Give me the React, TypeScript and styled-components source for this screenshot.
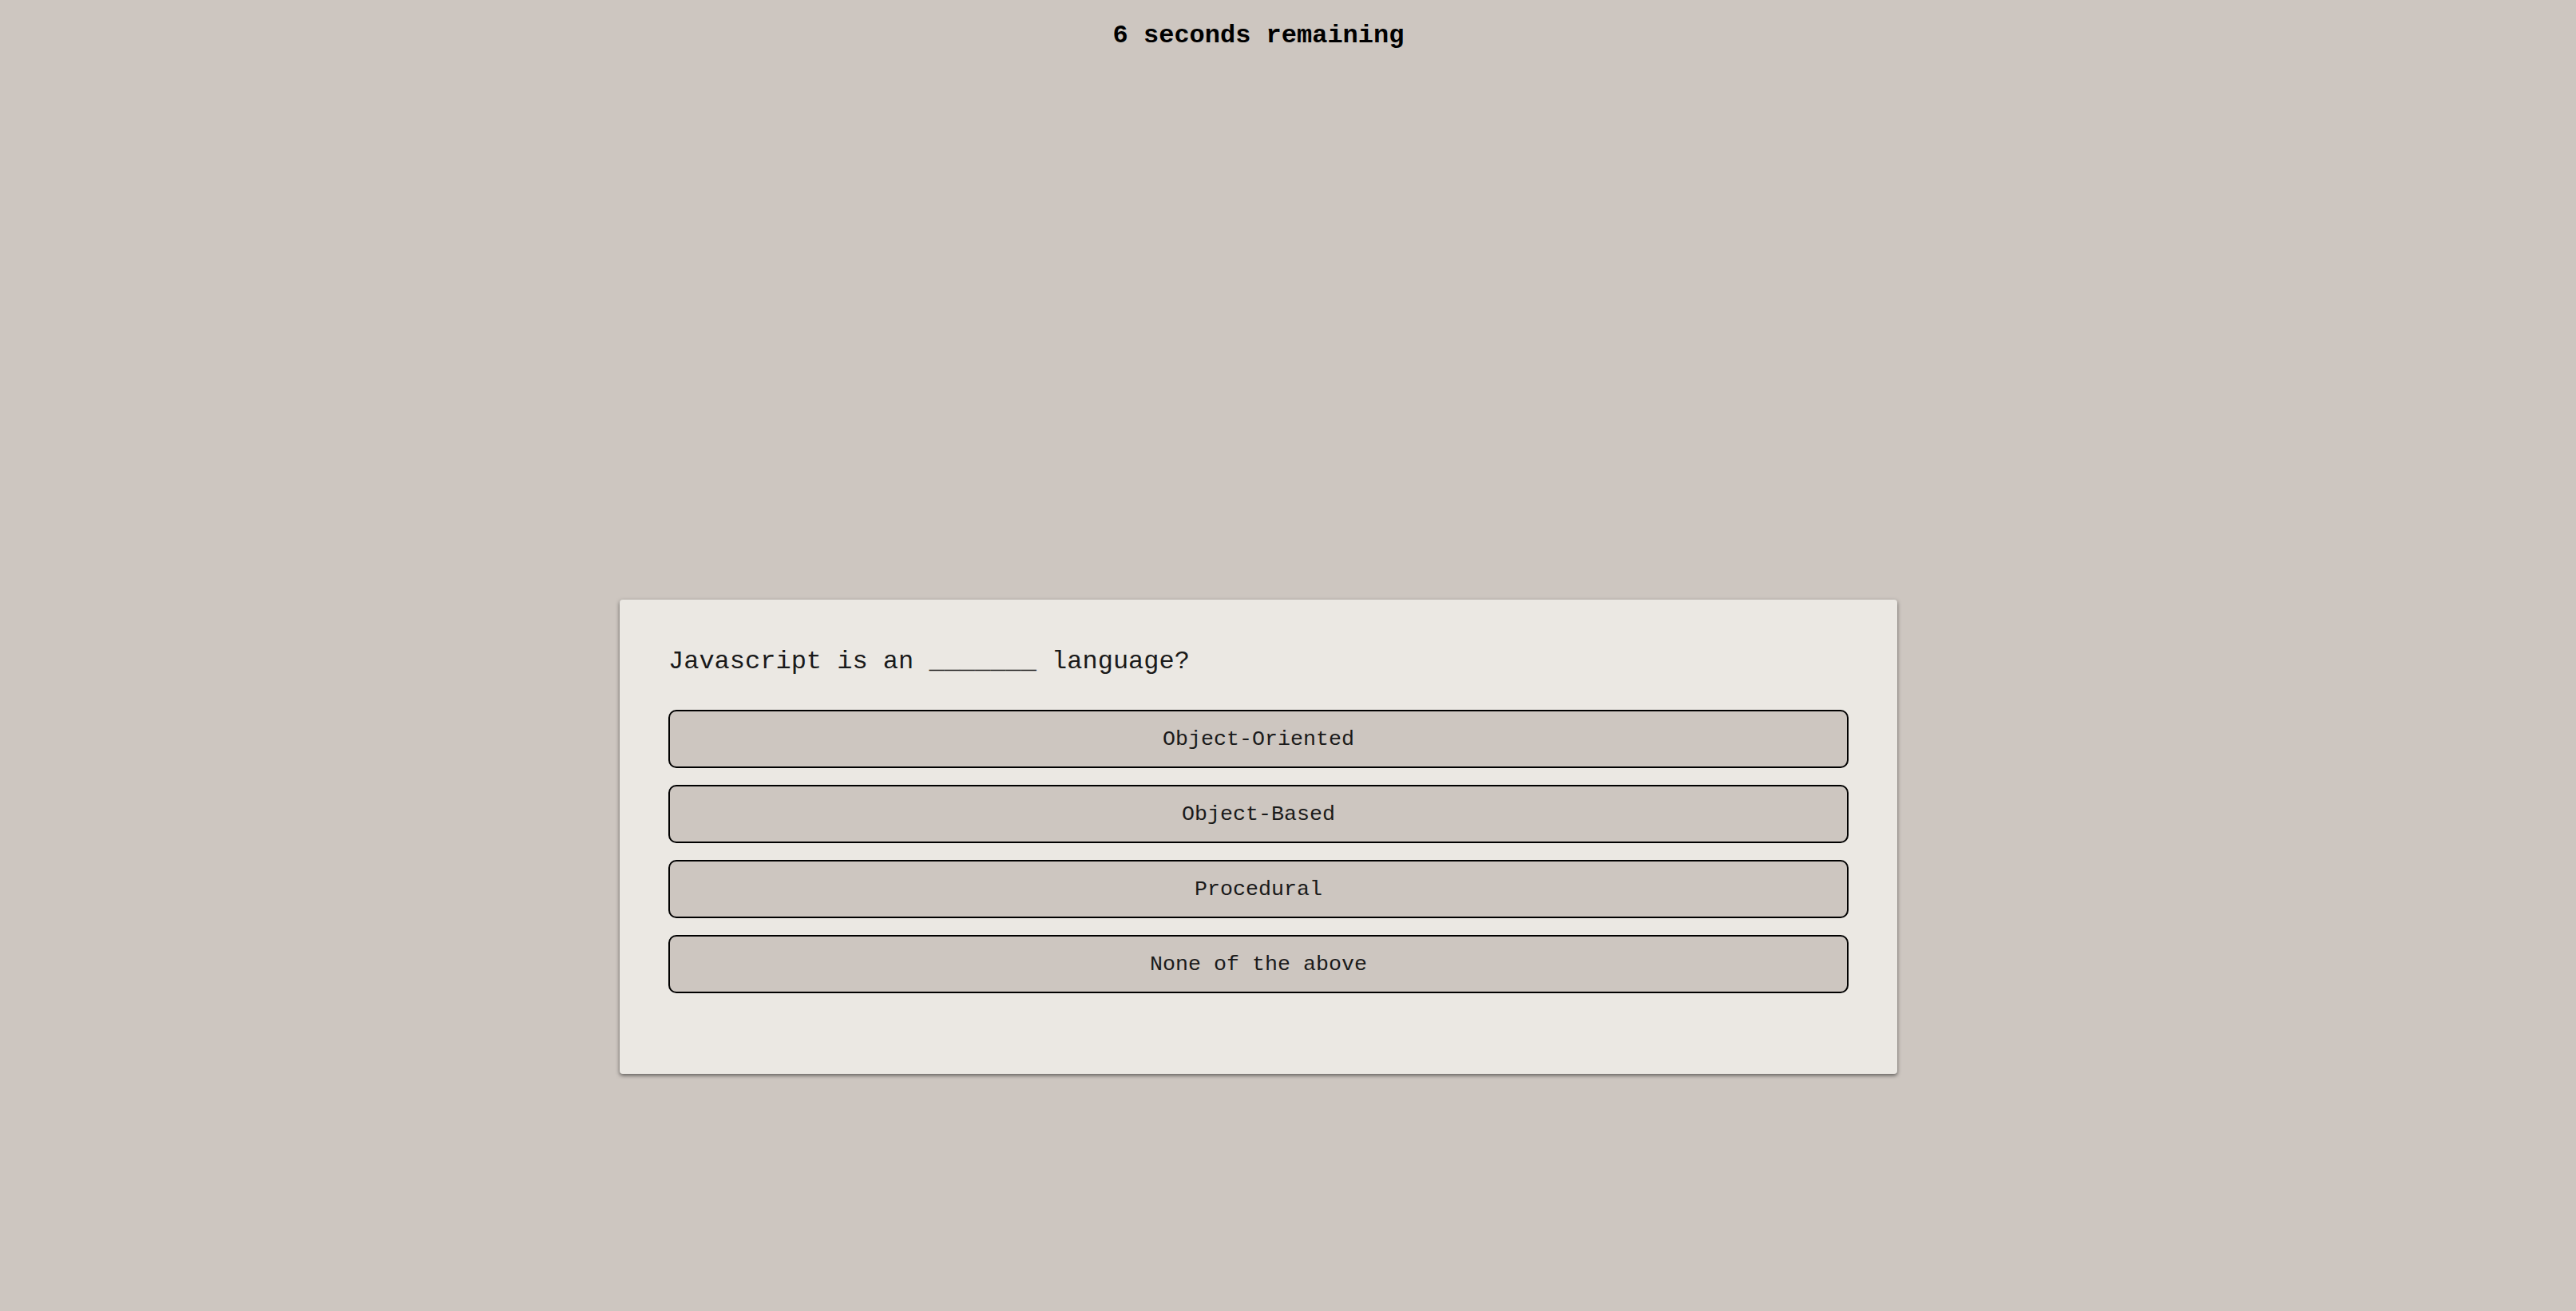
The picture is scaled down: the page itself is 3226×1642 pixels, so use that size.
import React from "react";
import styled, { createGlobalStyle } from "styled-components";

const Global = createGlobalStyle`
  html, body {
    margin: 0;
    padding: 0;
    background: #cdc6c0;
    font-family: "Liberation Mono", "Courier New", monospace;
  }
`;

const Page = styled.div`
  min-height: 1642px;
  box-sizing: border-box;
  padding-right: 74px;
  display: flex;
  flex-direction: column;
  align-items: center;
  background: #cdc6c0;
`;

const Timer = styled.div`
  margin-top: 27px;
  font-size: 32px;
  line-height: 36px;
  font-weight: bold;
  color: #000;
`;

const Card = styled.section`
  margin-top: 688px;
  width: 1600px;
  box-sizing: border-box;
  padding: 60px 61px 101px;
  background: #ebe8e3;
  border-radius: 4px;
  box-shadow: 0 2px 5px rgba(0, 0, 0, 0.55);
  display: flex;
  flex-direction: column;
`;

const Question = styled.h2`
  margin: 0 0 42px;
  font-size: 32px;
  line-height: 36px;
  font-weight: normal;
  color: #1a1a1a;
`;

const Options = styled.div`
  display: flex;
  flex-direction: column;
  gap: 21px;
`;

const Option = styled.button`
  height: 73px;
  width: 100%;
  background: #cdc6c0;
  border: 2px solid #000;
  border-radius: 10px;
  font-family: "Liberation Mono", "Courier New", monospace;
  font-size: 26.67px;
  color: #1a1a1a;
  cursor: pointer;
  padding: 0;
`;

const options = ["Object-Oriented", "Object-Based", "Procedural", "None of the above"];

export default function App() {
  return (
    <Page>
      <Global />
      <Timer>6 seconds remaining</Timer>
      <Card>
        <Question>Javascript is an _______ language?</Question>
        <Options>
          {options.map((o) => (
            <Option key={o}>{o}</Option>
          ))}
        </Options>
      </Card>
    </Page>
  );
}
